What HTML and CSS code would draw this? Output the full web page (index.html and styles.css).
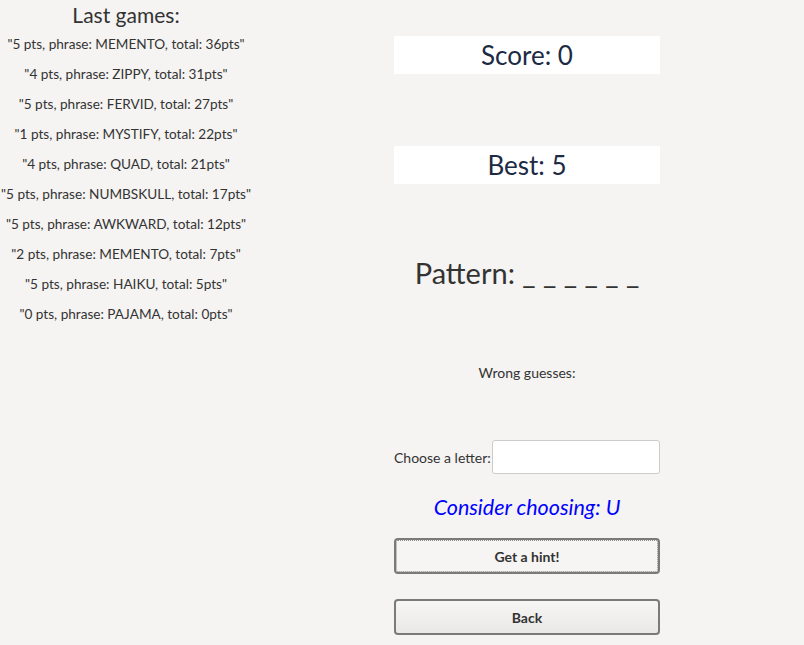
FILE: index.html
```html
<!DOCTYPE html>
<html>
<head>
<meta charset="utf-8">
<link rel="stylesheet" href="styles.css">
</head>
<body>
<div class="page">
  <aside class="history">
    <h2 class="history-title">Last games:</h2>
    <ul class="history-list">
      <li>"5 pts, phrase: MEMENTO, total: 36pts"</li>
      <li>"4 pts, phrase: ZIPPY, total: 31pts"</li>
      <li>"5 pts, phrase: FERVID, total: 27pts"</li>
      <li>"1 pts, phrase: MYSTIFY, total: 22pts"</li>
      <li>"4 pts, phrase: QUAD, total: 21pts"</li>
      <li>"5 pts, phrase: NUMBSKULL, total: 17pts"</li>
      <li>"5 pts, phrase: AWKWARD, total: 12pts"</li>
      <li>"2 pts, phrase: MEMENTO, total: 7pts"</li>
      <li>"5 pts, phrase: HAIKU, total: 5pts"</li>
      <li>"0 pts, phrase: PAJAMA, total: 0pts"</li>
    </ul>
  </aside>
  <main class="game">
    <div class="stat">Score: 0</div>
    <div class="stat stat-best">Best: 5</div>
    <div class="pattern">Pattern: _ _ _ _ _ _</div>
    <div class="wrong">Wrong guesses:</div>
    <label class="choose">
      <span class="choose-label">Choose a letter:</span>
      <input class="choose-input" type="text">
    </label>
    <div class="hint">Consider choosing: U</div>
    <button class="btn btn-focus">Get a hint!</button>
    <button class="btn btn-back">Back</button>
  </main>
</div>
</body>
</html>
```

FILE: styles.css
```css
* { box-sizing: border-box; }
html, body {
  margin: 0;
  padding: 0;
  background: #f5f4f2;
  font-family: "Source Sans Pro", Lato, "Noto Sans", sans-serif;
  color: #333333;
}
.page {
  display: flex;
  align-items: flex-start;
  width: 804px;
  height: 645px;
  overflow: hidden;
}
.history {
  width: 252px;
  text-align: center;
}
.history-title {
  margin: 3px 0 0;
  font-size: 21px;
  font-weight: 400;
  line-height: 24px;
  color: #333333;
}
.history-list {
  list-style: none;
  margin: 0;
  padding: 2px 0 0;
}
.history-list li {
  font-size: 13.6px;
  line-height: 30px;
  height: 30px;
  white-space: nowrap;
}
.game {
  margin-left: 142px;
  width: 266px;
  display: flex;
  flex-direction: column;
  align-items: stretch;
  text-align: center;
  padding-top: 36px;
}
.stat {
  background: #ffffff;
  height: 38px;
  font-size: 26px;
  line-height: 38px;
  color: #1c2a44;
}
.stat-best {
  margin-top: 72px;
}
.pattern {
  margin-top: 70px;
  font-size: 29px;
  line-height: 38px;
  color: #333333;
  white-space: nowrap;
  margin-left: -20px;
  margin-right: -20px;
}
.wrong {
  margin-top: 71px;
  font-size: 14px;
  line-height: 20px;
}
.choose {
  margin-top: 57px;
  display: flex;
  align-items: center;
  justify-content: space-between;
  height: 34px;
}
.choose-label {
  font-size: 14px;
}
.choose-input {
  width: 168px;
  height: 34px;
  border: 1px solid #cccccc;
  border-radius: 3px;
  background: #ffffff;
  font: inherit;
}
.hint {
  margin-top: 15px;
  font-size: 21.5px;
  line-height: 36px;
  font-style: italic;
  color: #0000ff;
}
.btn {
  display: block;
  height: 36px;
  border: 2px solid #7a7a7a;
  border-radius: 4px;
  background: #f6f5f3;
  font-family: inherit;
  font-size: 14px;
  font-weight: 700;
  color: #333333;
  cursor: pointer;
}
.btn-focus {
  margin-top: 13px;
  outline: 1px dotted #8a8a8a;
  outline-offset: -3px;
}
.btn-back {
  margin-top: 25px;
  background: linear-gradient(#f6f6f5, #e9e8e6);
}
```
